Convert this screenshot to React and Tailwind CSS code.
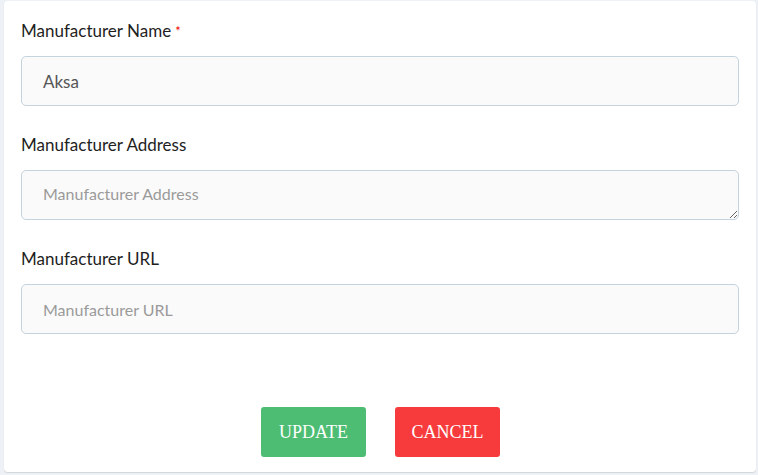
import { useState } from "react";

const fields = [
  { key: "name", label: "Manufacturer Name", required: true, placeholder: "Manufacturer Name" },
  { key: "address", label: "Manufacturer Address", multiline: true, placeholder: "Manufacturer Address" },
  { key: "url", label: "Manufacturer URL", placeholder: "Manufacturer URL" },
];

export default function App() {
  const [form, setForm] = useState({ name: "Aksa", address: "", url: "" });

  const inputClass =
    "block h-[50px] w-full rounded-[5px] border border-[#c5d3dd] bg-[#fafafa] px-[21px] text-[17px] text-[#555] placeholder:text-[16px] placeholder:text-[#9a9a9a] outline-none";

  return (
    <div className="h-[475px] w-[758px] bg-[#eef2f6] pl-[4px] pr-[2px] pt-[1px] font-['Lato',sans-serif]">
      <div className="h-[471px] rounded-[4px] bg-white px-[17px] pt-[18px] shadow-[0_1px_1px_#cfd6dd]">
        {fields.map((field) => (
          <div key={field.key} className="mb-[27px]">
            <label className="mb-[13px] block text-[17px] leading-[24px] text-[#1e1e1e]">
              {field.label}
              {field.required ? <span className="ml-[4px] align-top text-[13px] text-[#e00]">*</span> : null}
            </label>
            {field.multiline ? (
              <textarea
                className={inputClass + " resize-y pt-[12px] leading-[22px]"}
                placeholder={field.placeholder}
                value={form[field.key]}
                onChange={(e) => setForm({ ...form, [field.key]: e.target.value })}
              />
            ) : (
              <input
                className={inputClass}
                placeholder={field.placeholder}
                value={form[field.key]}
                onChange={(e) => setForm({ ...form, [field.key]: e.target.value })}
              />
            )}
          </div>
        ))}

        <div className="mt-[73px] flex justify-center gap-[29px] pl-[1px]">
          <button
            type="button"
            className="h-[50px] w-[105px] rounded-[3px] bg-[#4dbd74] font-['Liberation_Serif',serif] text-[18px] text-white"
          >
            UPDATE
          </button>
          <button
            type="button"
            className="h-[50px] w-[105px] rounded-[3px] bg-[#f73b3d] font-['Liberation_Serif',serif] text-[18px] text-white"
          >
            CANCEL
          </button>
        </div>
      </div>
    </div>
  );
}
